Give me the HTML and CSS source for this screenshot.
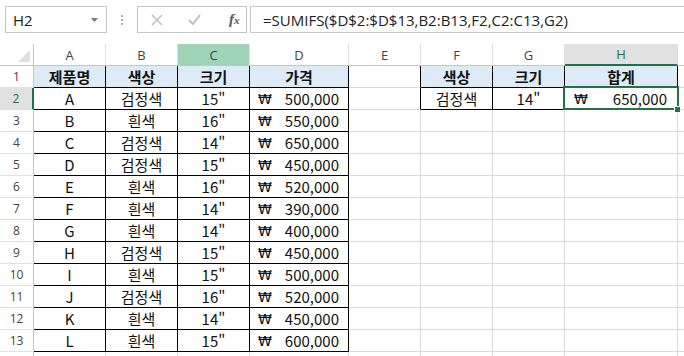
FILE: index.html
```html
<!DOCTYPE html>
<html lang="ko">
<head>
    <meta charset="UTF-8">
    <title>SUMIFS</title>
    <link rel="stylesheet" href="styles.css">
</head>
<body>
    <div class="formula-bar">
        <div class="name-box">
            <span>H2</span>
            <svg class="drop" width="7" height="4" viewBox="0 0 7 4"><path d="M0 0h7L3.5 4z" fill="#7a7a7a"/></svg>
        </div>
        <div class="grip"><i></i><i></i><i></i></div>
        <div class="fx-box">
            <svg width="12" height="12" viewBox="0 0 12 12"><path d="M1 1l10 10M11 1L1 11" stroke="#bdbdbd" stroke-width="1.4"/></svg>
            <svg width="13" height="11" viewBox="0 0 13 11"><path d="M1 6l4 4 7-9" stroke="#bdbdbd" stroke-width="1.8" fill="none"/></svg>
            <span class="fx">f<small>x</small></span>
        </div>
        <div class="formula">=SUMIFS($D$2:$D$13,B2:B13,F2,C2:C13,G2)</div>
    </div>

    <div class="sheet">
        <!-- column headers -->
        <div class="ch corner"><svg width="12" height="12" viewBox="0 0 12 12"><path d="M12 0v12H0z" fill="#dfdfdf"/></svg></div>
        <div class="ch">A</div>
        <div class="ch">B</div>
        <div class="ch ch-green">C</div>
        <div class="ch">D</div>
        <div class="ch">E</div>
        <div class="ch">F</div>
        <div class="ch">G</div>
        <div class="ch ch-sel">H</div>
        <div class="ch"></div>

        <!-- 1 -->
        <div class="rh">1</div>
        <div class="tb th">제품명</div>
        <div class="tb th">색상</div>
        <div class="tb th">크기</div>
        <div class="tb th">가격</div>
        <div class="tr"></div>
        <div class="tb th">색상</div>
        <div class="tb th">크기</div>
        <div class="tb th">합계</div>
        <div></div>

        <!-- 2 -->
        <div class="rh rh-sel">2</div>
        <div class="tb">A</div>
        <div class="tb">검정색</div>
        <div class="tb">15"</div>
        <div class="tb num"><span class="won">₩</span><span>500,000</span></div>
        <div class="tr"></div>
        <div class="tb">검정색</div>
        <div class="tb">14"</div>
        <div class="tb num sel"><span class="won">₩</span><span>650,000</span><b class="handle"></b></div>
        <div></div>

        <!-- 3 -->
        <div class="rh">3</div>
        <div class="tb">B</div>
        <div class="tb">흰색</div>
        <div class="tb">16"</div>
        <div class="tb num"><span class="won">₩</span><span>550,000</span></div>
        <div></div><div></div><div></div><div></div><div></div>

        <!-- 4 -->
        <div class="rh">4</div>
        <div class="tb">C</div>
        <div class="tb">검정색</div>
        <div class="tb">14"</div>
        <div class="tb num"><span class="won">₩</span><span>650,000</span></div>
        <div></div><div></div><div></div><div></div><div></div>

        <!-- 5 -->
        <div class="rh">5</div>
        <div class="tb">D</div>
        <div class="tb">검정색</div>
        <div class="tb">15"</div>
        <div class="tb num"><span class="won">₩</span><span>450,000</span></div>
        <div></div><div></div><div></div><div></div><div></div>

        <!-- 6 -->
        <div class="rh">6</div>
        <div class="tb">E</div>
        <div class="tb">흰색</div>
        <div class="tb">16"</div>
        <div class="tb num"><span class="won">₩</span><span>520,000</span></div>
        <div></div><div></div><div></div><div></div><div></div>

        <!-- 7 -->
        <div class="rh">7</div>
        <div class="tb">F</div>
        <div class="tb">흰색</div>
        <div class="tb">14"</div>
        <div class="tb num"><span class="won">₩</span><span>390,000</span></div>
        <div></div><div></div><div></div><div></div><div></div>

        <!-- 8 -->
        <div class="rh">8</div>
        <div class="tb">G</div>
        <div class="tb">흰색</div>
        <div class="tb">14"</div>
        <div class="tb num"><span class="won">₩</span><span>400,000</span></div>
        <div></div><div></div><div></div><div></div><div></div>

        <!-- 9 -->
        <div class="rh">9</div>
        <div class="tb">H</div>
        <div class="tb">검정색</div>
        <div class="tb">15"</div>
        <div class="tb num"><span class="won">₩</span><span>450,000</span></div>
        <div></div><div></div><div></div><div></div><div></div>

        <!-- 10 -->
        <div class="rh">10</div>
        <div class="tb">I</div>
        <div class="tb">흰색</div>
        <div class="tb">15"</div>
        <div class="tb num"><span class="won">₩</span><span>500,000</span></div>
        <div></div><div></div><div></div><div></div><div></div>

        <!-- 11 -->
        <div class="rh">11</div>
        <div class="tb">J</div>
        <div class="tb">검정색</div>
        <div class="tb">16"</div>
        <div class="tb num"><span class="won">₩</span><span>520,000</span></div>
        <div></div><div></div><div></div><div></div><div></div>

        <!-- 12 -->
        <div class="rh">12</div>
        <div class="tb">K</div>
        <div class="tb">흰색</div>
        <div class="tb">14"</div>
        <div class="tb num"><span class="won">₩</span><span>450,000</span></div>
        <div></div><div></div><div></div><div></div><div></div>

        <!-- 13 -->
        <div class="rh">13</div>
        <div class="tb">L</div>
        <div class="tb">흰색</div>
        <div class="tb">15"</div>
        <div class="tb num"><span class="won">₩</span><span>600,000</span></div>
        <div></div><div></div><div></div><div></div><div></div>

        <!-- 14, cut off by the window -->
        <div class="rh"></div>
        <div></div><div></div><div></div><div></div><div></div><div></div><div></div><div></div><div></div>
    </div>
</body>
</html>
```

FILE: styles.css
```css
body {
    margin: 0;
    background-color: #fff;
    font-family: "Noto Sans CJK KR", sans-serif;
    overflow: hidden;
}

.formula-bar {
    display: flex;
    height: 44px;
    box-sizing: border-box;
    padding: 6px 0 11px 5px;
    font-family: "Open Sans", "Noto Sans", sans-serif;
    color: #222;
}

.name-box {
    width: 102px;
    box-sizing: border-box;
    border: 1px solid #c6c6c6;
    display: flex;
    align-items: center;
    justify-content: space-between;
    padding: 0 8px 0 7px;
    font-size: 15px;
}

.grip {
    width: 30px;
    display: flex;
    flex-direction: column;
    align-items: center;
    justify-content: center;
    gap: 2px;
}

.grip i {
    width: 2px;
    height: 2px;
    background-color: #b0b0b0;
}

.fx-box {
    width: 110px;
    box-sizing: border-box;
    border: 1px solid #c6c6c6;
    display: flex;
    align-items: center;
    padding: 0 0 0 13px;
    gap: 25px;
}

.fx {
    font-family: "Liberation Serif", serif;
    font-style: italic;
    font-weight: bold;
    font-size: 15px;
    color: #555;
    margin-left: 3px;
}

.fx small {
    font-size: 11px;
}

.formula {
    flex: 1;
    margin-left: 3px;
    margin-right: -10px;
    border: 1px solid #c6c6c6;
    display: flex;
    align-items: center;
    padding-left: 12px;
    font-size: 15px;
}

.sheet {
    display: grid;
    grid-template-columns: 34px 72px 72px 72px 99px 72px 72px 72px 113px 80px;
    grid-auto-rows: 22px;
    font-size: 15px;
    color: #111;
}

.sheet > div {
    box-sizing: border-box;
    border-right: 1px solid #dadada;
    border-bottom: 1px solid #dadada;
    display: flex;
    align-items: center;
    justify-content: center;
    white-space: nowrap;
}

.sheet > .ch {
    font-family: "Open Sans", sans-serif;
    font-size: 13px;
    color: #444;
    border-right-color: #e1e1e1;
    border-bottom-color: #c6c6c6;
}

.sheet > .corner {
    justify-content: flex-end;
    align-items: flex-end;
    padding: 0 3px 3px 0;
    border-right-color: #c6c6c6;
}

.sheet > .ch-green {
    background-color: #9fd5b7;
}

.sheet > .ch-sel {
    background-color: #e1e1e1;
    color: #217346;
    border-bottom: 2px solid #217346;
}

.sheet > .rh {
    font-family: "Open Sans", sans-serif;
    font-size: 12px;
    color: #444;
    border-right-color: #c6c6c6;
    border-bottom-color: #e1e1e1;
}

.sheet > .rh-sel {
    background-color: #e1e1e1;
    color: #217346;
    border-right: 2px solid #217346;
}

.sheet > .tb {
    border-right-color: #000;
    border-bottom-color: #000;
}

.sheet > .tr {
    border-right-color: #000;
}

.sheet > .th {
    background-color: #ddebf7;
    font-weight: bold;
}

.sheet > .num {
    justify-content: space-between;
    padding: 0 9px 0 8px;
}

.won {
    font-family: "DejaVu Sans", sans-serif;
    font-size: 14px;
}

.sheet > .sel {
    position: relative;
    padding: 0 10px 0 9px;
}

.sel::before {
    content: "";
    position: absolute;
    left: -2px;
    top: -2px;
    right: -2px;
    bottom: -1px;
    border: 2px solid #217346;
}

.handle {
    position: absolute;
    right: -4px;
    bottom: -4px;
    width: 5px;
    height: 5px;
    background-color: #217346;
    border: 1px solid #fff;
}
```
